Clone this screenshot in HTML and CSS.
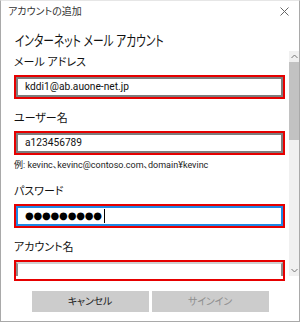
FILE: index.html
```html
<!DOCTYPE html>
<html lang="ja">
<head>
<meta charset="utf-8">
<link rel="stylesheet" href="styles.css">
</head>
<body>
<div class="window">
  <div class="titlebar">
    <span class="title">アカウントの追加</span>
    <svg class="close" width="9" height="9" viewBox="0 0 9 9"><path d="M0.5 0.5 L8.5 8.5 M8.5 0.5 L0.5 8.5" stroke="#666" stroke-width="1" fill="none"/></svg>
  </div>
  <div class="heading"><span class="heading-text">インターネット メール アカウント</span></div>
  <div class="main">
    <div class="content">
      <div class="label first">メール アドレス</div>
      <div class="mark"><div class="input">kddi1@ab.auone-net.jp</div></div>
      <div class="label">ユーザー名</div>
      <div class="mark"><div class="input">a123456789</div></div>
      <div class="hint">例: kevinc、kevinc@contoso.com、domain¥kevinc</div>
      <div class="label pw">パスワード</div>
      <div class="mark"><div class="input focus"><span class="dots">●●●●●●●●●</span><span class="caret"></span></div></div>
      <div class="label acct">アカウント名</div>
      <div class="mark last"><div class="input partial"></div></div>
    </div>
    <div class="scrollbar">
      <div class="arrow up"><svg width="7" height="5" viewBox="0 0 7 5"><path d="M0.5 4 L3.5 1 L6.5 4" stroke="#777" fill="none"/></svg></div>
      <div class="thumb"></div>
      <div class="track"></div>
      <div class="arrow down"><svg width="7" height="5" viewBox="0 0 7 5"><path d="M0.5 1 L3.5 4 L6.5 1" stroke="#777" fill="none"/></svg></div>
    </div>
  </div>
  <div class="footer">
    <div class="btn">キャンセル</div>
    <div class="btn disabled">サインイン</div>
  </div>
</div>
</body>
</html>
```

FILE: styles.css
```css
* { box-sizing: border-box; }
html, body { margin: 0; padding: 0; background: #fff; }
body {
  font-family: "Roboto", "Noto Sans CJK JP", sans-serif;
  font-feature-settings: "palt";
  color: #1a1a1a;
}
.window {
  width: 300px;
  height: 322px;
  border: 1px solid #a9a9a9;
  border-top-color: #e6e6e6;
  display: flex;
  flex-direction: column;
  background: #fff;
}
.titlebar {
  height: 21px;
  display: flex;
  align-items: center;
  justify-content: space-between;
  padding: 0 10px 0 7px;
}
.title {
  font-size: 10px;
  line-height: 14px;
  color: #333;
}
.close { display: block; }
.heading {
  height: 29px;
  padding: 10px 0 0 14px;
  line-height: 18px;
  color: #111;
}
.heading-text {
  display: inline-block;
  font-size: 14.5px;
  transform: scaleX(0.74);
  transform-origin: left center;
  white-space: nowrap;
}
.main {
  height: 225px;
  display: flex;
}
.content {
  flex: 1;
  padding: 4px 4px 0 13px;
}
.label {
  font-size: 11px;
  line-height: 16px;
  margin-top: 12px;
  color: #111;
}
.label.first { margin-top: 0; }
.label.pw { margin-top: 11px; }
.label.acct { margin-top: 12px; }
.mark {
  margin-top: 4px;
  border: 2px solid #e60000;
  height: 24px;
}
.input {
  height: 100%;
  border: 2px solid #7d7d7d;
  padding-left: 7px;
  font-size: 10.2px;
  line-height: 16px;
  display: flex;
  align-items: center;
  color: #111;
}
.input.focus { border-color: #1e88e5; }
.dots {
  font-family: "DejaVu Sans", sans-serif;
  font-size: 10px;
  letter-spacing: -0.2px;
  color: #000;
}
.caret {
  width: 1px;
  height: 14px;
  background: #000;
  margin-left: 2px;
}
.mark.last { height: 21px; }
.input.partial {
  height: 14px;
  border-color: #8c8c8c;
  border-bottom: none;
  border-top-color: #d0d0d0;
}
.hint {
  margin-top: 2px;
  font-size: 9px;
  line-height: 16px;
  color: #222;
}
.scrollbar {
  width: 10px;
  display: flex;
  flex-direction: column;
  background: #f0f0f0;
}
.arrow {
  height: 11px;
  display: flex;
  align-items: center;
  justify-content: center;
}
.thumb {
  height: 78px;
  background: #c2c2c2;
}
.track { flex: 1; }
.footer {
  flex: 1;
  display: flex;
  justify-content: center;
  gap: 3px;
  padding-top: 15px;
}
.btn {
  width: 117px;
  height: 21px;
  background: #cccccc;
  font-size: 10px;
  letter-spacing: -0.2px;
  line-height: 21px;
  text-align: center;
  color: #222;
}
.btn.disabled { color: #8f8f8f; }
```
